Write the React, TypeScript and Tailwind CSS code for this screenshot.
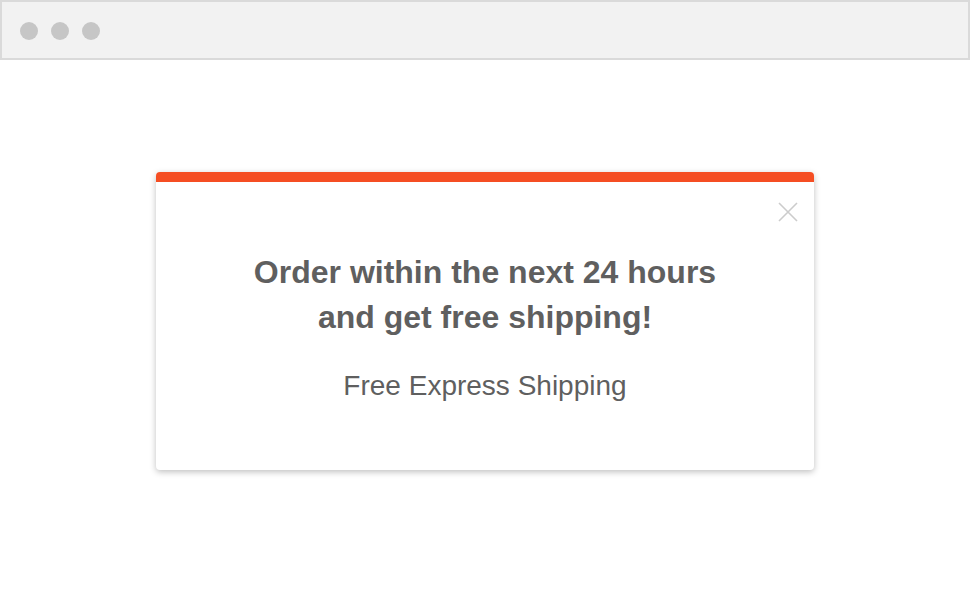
export default function App() {
  return (
    <div
      className="w-[970px] h-[600px] bg-white flex flex-col"
      style={{ fontFamily: '"Liberation Sans", Arial, sans-serif' }}
    >
      {/* Browser chrome */}
      <div className="h-[60px] bg-[#f2f2f2] border-2 border-[#dadada] flex items-center gap-[13px] pl-[18px] pt-[2px]">
        <span className="w-[18px] h-[18px] rounded-full bg-[#c6c6c6]" />
        <span className="w-[18px] h-[18px] rounded-full bg-[#c6c6c6]" />
        <span className="w-[18px] h-[18px] rounded-full bg-[#c6c6c6]" />
      </div>

      {/* Popup */}
      <div className="pt-[112px] pl-[156px]">
        <div className="relative w-[658px] h-[298px] bg-white rounded-[4px] overflow-hidden shadow-[0_2px_6px_rgba(0,0,0,0.25)] flex flex-col">
          <div className="h-[10px] bg-[#f54e23]" />
          <button className="absolute right-[16px] top-[30px] w-[20px] h-[20px] text-[#cccccc]">
            <svg viewBox="0 0 20 20" className="w-[20px] h-[20px]" fill="none" stroke="currentColor" strokeWidth="1.6">
              <path d="M1 1 L19 19 M19 1 L1 19" />
            </svg>
          </button>
          <div className="flex flex-col items-center pt-[68px] text-[#5f5f5f]">
            <h2 className="text-[32px] font-bold leading-[45px] text-center">
              Order within the next 24 hours
              <br />
              and get free shipping!
            </h2>
            <p className="mt-[31px] text-[28px] leading-[30px]">Free Express Shipping</p>
          </div>
        </div>
      </div>
    </div>
  );
}
